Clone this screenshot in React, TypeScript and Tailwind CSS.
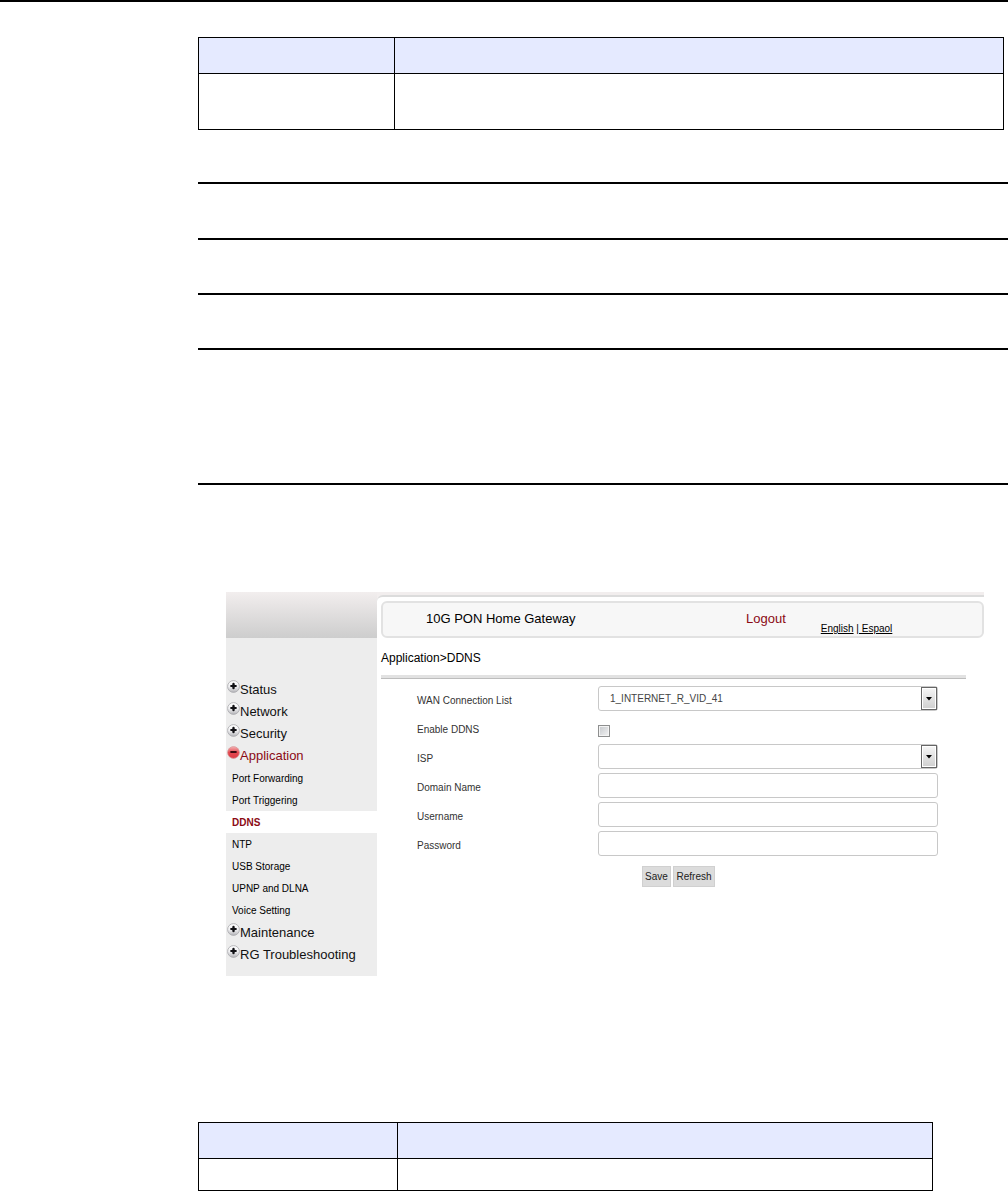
import React, { useState } from 'react';

type MenuItem = { label: string; open?: boolean; children?: string[] };

const MENU: MenuItem[] = [
  { label: 'Status' },
  { label: 'Network' },
  { label: 'Security' },
  {
    label: 'Application',
    open: true,
    children: ['Port Forwarding', 'Port Triggering', 'DDNS', 'NTP', 'USB Storage', 'UPNP and DLNA', 'Voice Setting'],
  },
  { label: 'Maintenance' },
  { label: 'RG Troubleshooting' },
];

const FIELD = 'block h-[25px] w-full rounded-[3px] border border-[#c8c8c8] bg-white text-[10px] text-[#444]';

function Rule() {
  return <hr className="h-[2px] border-0 bg-black" />;
}

function EmptyTable({ first, body }: { first: string; body: string }) {
  return (
    <table className="w-full table-fixed border-collapse border border-black">
      <thead>
        <tr className="h-9 bg-[#e5eaff]">
          <th className={`border border-black ${first}`}></th>
          <th className="border border-black"></th>
        </tr>
      </thead>
      <tbody>
        <tr className={body}>
          <td className="border border-black"></td>
          <td className="border border-black"></td>
        </tr>
      </tbody>
    </table>
  );
}

function Bullet({ open }: { open?: boolean }) {
  const id = open ? 'bullet-open' : 'bullet-closed';
  return (
    <svg width="13" height="13" viewBox="0 0 13 13" className="mt-[1px] shrink-0" aria-hidden="true">
      <defs>
        <linearGradient id={id} x1="0" y1="0" x2="0" y2="1">
          <stop offset="0" stopColor={open ? '#f6b4b6' : '#ffffff'} />
          <stop offset="0.5" stopColor={open ? '#e4484f' : '#f0f0f2'} />
          <stop offset="1" stopColor={open ? '#dc3a44' : '#b4b4b8'} />
        </linearGradient>
      </defs>
      <circle cx="6.5" cy="6.5" r="5.9" fill={`url(#${id})`} stroke={open ? '#d89a9c' : '#a8a8ac'} strokeWidth="0.8" />
      <path d="M4.2 6h4.6" stroke={open ? '#3c0a10' : '#101014'} strokeWidth="2.2" strokeLinecap="round" />
      {!open && <path d="M6.5 4v4" stroke="#101014" strokeWidth="2.4" strokeLinecap="round" />}
    </svg>
  );
}

function Sidebar() {
  return (
    <aside className="w-[151px] shrink-0 bg-[#ededed] pb-[10px]">
      <div className="h-[46px] bg-linear-to-b from-[#f2eeee] to-[#cdcdcd]"></div>
      <nav className="pt-[41px]">
        {MENU.map((item) => (
          <div key={item.label} className={item.open ? 'pb-px' : ''}>
            <a href="#" className={`flex h-[22px] pl-px text-[13px] leading-[22px] ${item.open ? 'text-[#8b0a14]' : 'text-[#111]'}`}>
              <Bullet open={item.open} />
              {item.label}
            </a>
            {item.children?.map((child) => (
              <a
                key={child}
                href="#"
                className={`block h-[22px] pl-[6px] text-[10px] leading-6 ${
                  child === 'DDNS' ? 'bg-white font-bold text-[#8b0a14]' : 'text-black'
                }`}
              >
                {child}
              </a>
            ))}
          </div>
        ))}
      </nav>
    </aside>
  );
}

function Row({ id, label, children }: { id: string; label: string; children: React.ReactNode }) {
  return (
    <div className="flex h-[29px]">
      <label htmlFor={id} className="w-[181px] shrink-0 text-[10px] leading-[29px] text-[#333]">{label}</label>
      <div className="min-w-0 flex-1">{children}</div>
    </div>
  );
}

function Select({ id, option }: { id: string; option: string }) {
  return (
    <div className="relative">
      <select id={id} className={`${FIELD} appearance-none pr-5 pl-[11px]`}>
        <option>{option}</option>
      </select>
      <span className="pointer-events-none absolute top-px right-px flex h-[23px] w-4 items-center justify-center border border-[#666] bg-linear-to-b from-[#f6f6f6] to-[#cfcfcf] shadow-[inset_0_0_0_1px_#fff]">
        <svg width="6" height="4" viewBox="0 0 6 4" aria-hidden="true">
          <path d="M0 0h6L3 3.5z" fill="#000" />
        </svg>
      </span>
    </div>
  );
}

function DdnsForm() {
  const [enabled, setEnabled] = useState(false);
  return (
    <form className="pt-[7px] pr-[46px] pl-9" onSubmit={(e) => e.preventDefault()}>
      <Row id="wan" label="WAN Connection List"><Select id="wan" option="1_INTERNET_R_VID_41" /></Row>
      <Row id="enable" label="Enable DDNS">
        <input
          id="enable"
          type="checkbox"
          checked={enabled}
          onChange={(e) => setEnabled(e.target.checked)}
          className="mt-[10px] block size-3 appearance-none border border-[#8e8f8f] bg-linear-to-br from-[#c5c8cc] to-[#f4f4f4] shadow-[inset_0_0_0_1px_#f4f4f4] checked:bg-[#444]"
        />
      </Row>
      <Row id="isp" label="ISP"><Select id="isp" option="" /></Row>
      <Row id="domain" label="Domain Name"><input id="domain" type="text" className={`${FIELD} px-2`} /></Row>
      <Row id="username" label="Username"><input id="username" type="text" className={`${FIELD} px-2`} /></Row>
      <Row id="password" label="Password"><input id="password" type="password" className={`${FIELD} px-2`} /></Row>
      <div className="flex gap-[2px] pt-[6px] pl-[225px]">
        <button type="submit" className="h-[21px] w-[29px] border border-[#d0d0d0] bg-[#dcdcdc] text-[10px] text-[#222]">Save</button>
        <button type="button" className="h-[21px] w-[42px] border border-[#d0d0d0] bg-[#dcdcdc] text-[10px] text-[#222]">Refresh</button>
      </div>
    </form>
  );
}

function Gateway() {
  return (
    <section className="flex">
      <Sidebar />
      <div className="min-w-0 flex-1 bg-[#f2eeee] pt-[3px]">
        <div className="h-full rounded-tl-md border-t-2 border-[#dcdcdc] bg-white pt-1 pl-1">
          <header className="flex h-[37px] rounded-md border-2 border-[#e2e2e2] bg-[#f7f7f7]">
            <h1 className="w-[320px] shrink-0 pl-[43px] text-[13px] leading-8 text-black">10G PON Home Gateway</h1>
            <a href="#" className="ml-[43px] text-[13px] leading-8 text-[#8b0a14]">Logout</a>
            <p className="ml-[35px] pt-[19px] text-[10px] leading-[14px] whitespace-pre text-black">
              <a href="#" className="underline">English</a> |<a href="#" className="underline"> Espaol</a>
            </p>
          </header>
          <h2 className="pt-[10px] text-[12px] leading-5 text-black">Application&gt;DDNS</h2>
          <div className="mt-[7px] mr-[18px] h-1 border-b border-[#bdbdbd] bg-[#e2e2e2]"></div>
          <DdnsForm />
        </div>
      </div>
    </section>
  );
}

export default function App() {
  return (
    <main className="border-t-2 border-black bg-white font-['Liberation_Sans',Arial,sans-serif]">
      <div className="pl-[198px]">
        <div className="pt-[35px] pr-1"><EmptyTable first="w-[196px]" body="h-14" /></div>
        <div className="flex flex-col pt-[52px]">
          <Rule />
          <div className="pt-[54px]"><Rule /></div>
          <div className="pt-[53px]"><Rule /></div>
          <div className="pt-[53px]"><Rule /></div>
          <div className="pt-[133px]"><Rule /></div>
        </div>
        <div className="pt-[107px] pr-6 pl-7"><Gateway /></div>
        <div className="pt-[146px] pr-[75px]"><EmptyTable first="w-[199px]" body="h-8" /></div>
      </div>
    </main>
  );
}
